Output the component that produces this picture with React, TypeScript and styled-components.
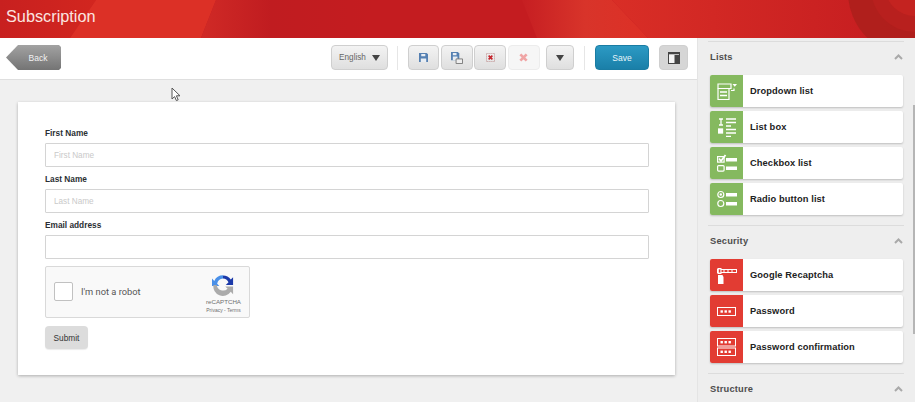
import React from 'react';
import styled, { createGlobalStyle } from 'styled-components';

const GlobalStyle = createGlobalStyle`
  html, body {
    margin: 0;
    padding: 0;
    width: 915px;
    height: 402px;
    overflow: hidden;
    background: #efefef;
    font-family: 'Liberation Sans', Arial, sans-serif;
  }
  * {
    box-sizing: border-box;
  }
`;

const Page = styled.div`
  width: 915px;
  height: 402px;
  display: flex;
  flex-direction: column;
  overflow: hidden;
  position: relative;
`;

const Header = styled.header`
  height: 38px;
  flex-shrink: 0;
  position: relative;
  display: flex;
  align-items: center;
  padding-left: 6px;
  background: #c41c20;
  overflow: hidden;
`;

const HeaderArt = styled.svg`
  position: absolute;
  left: 0;
  top: 0;
`;

const Title = styled.h1`
  position: relative;
  margin: 0 0 5px;
  font-size: 16.3px;
  font-weight: 400;
  color: #fbe4e0;
`;

const Body = styled.div`
  flex: 1;
  display: flex;
  min-height: 0;
`;

const Main = styled.main`
  width: 697px;
  flex-shrink: 0;
  display: flex;
  flex-direction: column;
  background: #f0f0f0;
`;

const Toolbar = styled.div`
  height: 42px;
  flex-shrink: 0;
  display: flex;
  align-items: center;
  padding: 0 9px 2px 6px;
  background: #fff;
  border-bottom: 1px solid #dfdfdf;
`;

const BackButton = styled.button`
  width: 55px;
  height: 25px;
  border: 0;
  padding: 0 0 0 9px;
  margin-right: auto;
  font: 400 8.5px 'Liberation Sans', Arial, sans-serif;
  color: #f2f2f2;
  background: linear-gradient(#a2a2a2, #747474);
  clip-path: polygon(0 50%, 12px 0, calc(100% - 2px) 0, 100% 2px, 100% calc(100% - 2px), calc(100% - 2px) 100%, 12px 100%);
`;

const GreyButton = styled.button<{ $width: number; $faded?: boolean }>`
  width: ${(props) => props.$width}px;
  height: 25px;
  padding: 0;
  display: flex;
  align-items: center;
  justify-content: center;
  gap: 6px;
  border: 1px solid ${(props) => (props.$faded ? '#ececec' : '#cfcfcf')};
  border-radius: 4px;
  background: ${(props) => (props.$faded ? '#f6f6f6' : 'linear-gradient(#f3f3f3, #dfdfdf)')};
  font: 400 8.2px 'Liberation Sans', Arial, sans-serif;
  color: #666;
`;

const ButtonGroup = styled.div`
  display: flex;
  gap: 1.5px;
`;

const MenuButton = styled(GreyButton)`
  margin-left: 6.5px;
`;

const Divider = styled.span<{ $left: number; $right: number }>`
  width: 1px;
  height: 24px;
  background: #e6e6e6;
  margin: 0 ${(props) => props.$right}px 0 ${(props) => props.$left}px;
`;

const SaveButton = styled.button`
  width: 54px;
  height: 25px;
  border: 1px solid #1a7ca3;
  border-radius: 4px;
  background: linear-gradient(#2c9ac4, #1a7fa8);
  color: #e8f6fb;
  font: 400 8.5px 'Liberation Sans', Arial, sans-serif;
  padding: 0;
`;

const PanelToggle = styled(GreyButton)`
  margin-left: 10px;
  background: #d6d6d6;
`;

const Caret = styled.span`
  width: 0;
  height: 0;
  border-left: 4px solid transparent;
  border-right: 4px solid transparent;
  border-top: 6px solid #444;
`;

const Content = styled.div`
  flex: 1;
  padding: 22px 22px 0 18px;
`;

const Card = styled.form`
  width: 657px;
  height: 273px;
  padding: 25px 26px 0 27px;
  background: #fff;
  box-shadow: 0 1px 3px rgba(0, 0, 0, 0.28);
`;

const Field = styled.div`
  display: flex;
  flex-direction: column;
  margin-bottom: 6px;
`;

const Label = styled.label`
  height: 16px;
  padding-top: 1px;
  font-size: 8.3px;
  font-weight: 700;
  color: #2b2f33;
`;

const Input = styled.input`
  width: 100%;
  height: 24px;
  padding: 0 8px;
  border: 1px solid #d4d4d4;
  border-radius: 1px;
  outline: none;
  background: #fff;
  font: 400 8.2px 'Liberation Sans', Arial, sans-serif;

  &::placeholder {
    color: #c9c9c9;
  }
`;

const Captcha = styled.div`
  width: 205px;
  height: 52px;
  margin-top: 7px;
  padding: 0 8px;
  display: flex;
  align-items: center;
  background: #f9f9f9;
  border: 1px solid #d9d9d9;
  border-radius: 2px;
`;

const CaptchaBox = styled.span`
  width: 19px;
  height: 19px;
  flex-shrink: 0;
  margin-bottom: 1px;
  background: #fff;
  border: 1px solid #c1c1c1;
  border-radius: 2px;
`;

const CaptchaText = styled.span`
  margin-left: 8px;
  margin-bottom: 2px;
  font: 400 9.3px Roboto, 'Liberation Sans', sans-serif;
  color: #555;
`;

const CaptchaBrand = styled.div`
  margin-left: auto;
  margin-top: 3px;
  display: flex;
  flex-direction: column;
  align-items: center;
  color: #6f6f6f;
`;

const BrandName = styled.span`
  font-size: 6.2px;
  line-height: 9px;
  margin-top: 1px;
`;

const BrandLinks = styled.span`
  font-size: 5px;
  line-height: 8px;
  white-space: nowrap;
`;

const SubmitButton = styled.button`
  display: block;
  width: 43px;
  height: 23px;
  margin-top: 8px;
  padding: 0;
  border: 0;
  border-radius: 4px;
  background: #dcdcdc;
  box-shadow: 0 1px 1px rgba(0, 0, 0, 0.08);
  font: 400 8.3px 'Liberation Sans', Arial, sans-serif;
  color: #333;
`;

const Sidebar = styled.aside`
  flex: 1;
  position: relative;
  padding: 3px 11px 0 10px;
  background: #eeeeee;
  border-left: 1px solid #e4e4e4;
  overflow: hidden;
`;

const ScrollThumb = styled.span`
  position: absolute;
  top: 67px;
  right: 0;
  width: 2px;
  height: 229px;
  background: #b5b5b5;
`;

const Section = styled.section`
  border-top: 1px solid #dcdcdc;
  padding: 0 1px 10px 2px;
`;

const SectionHead = styled.div`
  height: 33px;
  padding: 0 0 3px;
  display: flex;
  align-items: center;
  justify-content: space-between;
`;

const SectionTitle = styled.h2`
  margin: 0;
  font-size: 9.3px;
  font-weight: 700;
  letter-spacing: 0.2px;
  color: #4d4d4d;
`;

const ItemList = styled.div`
  display: flex;
  flex-direction: column;
  gap: 4px;
`;

const Item = styled.div`
  height: 32px;
  display: flex;
  align-items: center;
  background: #fff;
  border-radius: 2px;
  box-shadow: 0 1px 2px rgba(0, 0, 0, 0.2);
`;

const ItemIcon = styled.span<{ $color: string }>`
  width: 33px;
  height: 32px;
  flex-shrink: 0;
  display: flex;
  align-items: center;
  justify-content: center;
  background: ${(props) => props.$color};
  border-radius: 2px 0 0 2px;
`;

const ItemLabel = styled.span`
  margin-left: 7px;
  margin-bottom: 1px;
  font-size: 9.3px;
  font-weight: 700;
  letter-spacing: 0.1px;
  color: #222;
`;

const Cursor = styled.svg`
  position: absolute;
  left: 171px;
  top: 87px;
`;

const Chevron = () => (
  <svg width="9" height="6" viewBox="0 0 9 6">
    <path d="M1 5l3.5-3.5L8 5" fill="none" stroke="#a9a9a9" strokeWidth="2" />
  </svg>
);

const Floppy = () => (
  <svg width="9" height="9" viewBox="0 0 10 10">
    <path d="M0 0h8.5L10 1.5V10H0z" fill="#5580b2" />
    <path d="M2.5 1h4.5v2.5H2.5zM2 6h6v4H2z" fill="#e8edf3" />
  </svg>
);

const FloppyAs = () => (
  <svg width="12" height="12" viewBox="0 0 13 13">
    <path d="M0 0h7.5L9 1.5V9H0z" fill="#5580b2" />
    <path d="M2 1h4v2.5H2zM2 5h5v4H2z" fill="#e8edf3" />
    <path d="M5.5 7.5h7v5h-7z" fill="#eee" stroke="#777" />
  </svg>
);

const DottedCross = () => (
  <svg width="9" height="9" viewBox="0 0 11 11">
    <rect x="0.5" y="0.5" width="10" height="10" fill="none" stroke="#b88" strokeWidth="1" strokeDasharray="1.5 1" />
    <path d="M3.2 3.2l4.6 4.6M7.8 3.2l-4.6 4.6" stroke="#c6242c" strokeWidth="2" />
  </svg>
);

const FadedCross = () => (
  <svg width="9" height="9" viewBox="0 0 10 10">
    <path d="M1.5 1.5l7 7M8.5 1.5l-7 7" stroke="#f0a5a5" strokeWidth="3" />
  </svg>
);

const PanelIcon = () => (
  <svg width="12" height="12" viewBox="0 0 12 12">
    <rect x="0.5" y="0.5" width="11" height="11" fill="#f4f4f4" stroke="#444" />
    <rect x="6.5" y="3" width="5" height="8.5" fill="#444" />
    <rect x="0.5" y="0.5" width="11" height="1.8" fill="#444" />
  </svg>
);

const RecaptchaLogo = () => (
  <svg width="22" height="22" viewBox="0 0 24 24">
    <path d="M12 1.5A10.5 10.5 0 0 0 2.5 7.5L0 5v8h8L5.6 10.5A7 7 0 0 1 12 5z" fill="#4a90e8" />
    <path d="M12 1.5A10.5 10.5 0 0 1 20.5 6L23 3.5V12h-8l3-3A7 7 0 0 0 12 5z" fill="#1c3aa9" />
    <path d="M1.5 12h3.6A7 7 0 0 0 17 16l-2.5-2.5H23V22l-2.5-2.6A10.5 10.5 0 0 1 1.5 12z" fill="#ababab" />
  </svg>
);

const DropdownIcon = () => (
  <svg width="20" height="18" viewBox="0 0 20 18" fill="none" stroke="#fff" strokeWidth="1.2">
    <path d="M17 6.5v2H14M1 6.5v11h11v-11" />
    <path d="M1 2h13v4.5H1z" />
    <path d="M3 10h7M3 13.5h7" strokeWidth="1.6" />
    <path d="M15.5 2h4.5l-2.25 2.8z" fill="#fff" stroke="none" />
  </svg>
);

const ListBoxIcon = () => (
  <svg width="18" height="19" viewBox="0 0 18 19" fill="none" stroke="#fff" strokeWidth="1.3">
    <path d="M1 1h4M1 7h4M3 1v6" />
    <rect x="0.5" y="11" width="4" height="4" fill="#fff" />
    <path d="M8 1h10M8 4.5h10M8 8h5M8 11.5h10M8 15h10M8 18.5h5" />
  </svg>
);

const CheckboxIcon = () => (
  <svg width="20" height="18" viewBox="0 0 20 18" fill="none" stroke="#fff" strokeWidth="1.2">
    <rect x="0.6" y="2.6" width="6.5" height="5.5" />
    <path d="M2 4.5l2 2.5 4.5-6" strokeWidth="1.8" />
    <rect x="0.6" y="11.6" width="6.5" height="5.5" rx="1" />
    <rect x="9" y="4" width="11" height="3.5" fill="#fff" stroke="none" />
    <rect x="9" y="12.5" width="11" height="3.5" fill="#fff" stroke="none" />
  </svg>
);

const RadioIcon = () => (
  <svg width="20" height="18" viewBox="0 0 20 18" fill="none" stroke="#fff" strokeWidth="1.2">
    <circle cx="3.8" cy="4.5" r="3" />
    <circle cx="3.8" cy="4.5" r="1.2" fill="#fff" stroke="none" />
    <circle cx="3.8" cy="13.5" r="3" />
    <rect x="9" y="3" width="11" height="3.5" fill="#fff" stroke="none" />
    <rect x="9" y="12" width="11" height="3.5" fill="#fff" stroke="none" />
  </svg>
);

const RecaptchaIcon = () => (
  <svg width="20" height="18" viewBox="0 0 20 18" fill="none">
    <path d="M1 9h4.5l1 2V18H1z" fill="#fff" />
    <rect x="0.5" y="3.5" width="19" height="3" stroke="#fff" strokeWidth="1" />
    <path d="M6 5h2M10 5h2M14 5h2" stroke="#fff" strokeWidth="1.2" />
    <rect x="0.5" y="2" width="4" height="6" fill="#fff" />
    <rect x="1.8" y="3.4" width="1.6" height="3.2" fill="#e33b32" />
  </svg>
);

const Dots = ({ y }: { y: number }) => (
  <g fill="#fff">
    <rect x="3.5" y={y} width="2.4" height="2.4" />
    <rect x="7.5" y={y} width="2.4" height="2.4" />
    <rect x="11.5" y={y} width="2.4" height="2.4" />
  </g>
);

const PasswordIcon = () => (
  <svg width="19" height="9" viewBox="0 0 19 9" fill="none">
    <rect x="0.5" y="0.5" width="18" height="8" stroke="#fff" />
    <Dots y={3.3} />
  </svg>
);

const ConfirmIcon = () => (
  <svg width="19" height="18" viewBox="0 0 19 18" fill="none">
    <rect x="0.5" y="0.5" width="18" height="7.5" stroke="#fff" />
    <rect x="0.5" y="10" width="18" height="7.5" stroke="#fff" />
    <Dots y={3} />
    <Dots y={12.6} />
  </svg>
);

const GREEN = '#85b95f';
const RED = '#e23c33';

const sections = [
  {
    title: 'Lists',
    color: GREEN,
    items: [
      { label: 'Dropdown list', icon: <DropdownIcon /> },
      { label: 'List box', icon: <ListBoxIcon /> },
      { label: 'Checkbox list', icon: <CheckboxIcon /> },
      { label: 'Radio button list', icon: <RadioIcon /> },
    ],
  },
  {
    title: 'Security',
    color: RED,
    items: [
      { label: 'Google Recaptcha', icon: <RecaptchaIcon /> },
      { label: 'Password', icon: <PasswordIcon /> },
      { label: 'Password confirmation', icon: <ConfirmIcon /> },
    ],
  },
  { title: 'Structure', color: RED, items: [] },
];

const fields = [
  { label: 'First Name', placeholder: 'First Name' },
  { label: 'Last Name', placeholder: 'Last Name' },
  { label: 'Email address', placeholder: '' },
];

export default function App() {
  return (
    <Page>
      <GlobalStyle />
      <Header>
        <HeaderArt width="915" height="38" viewBox="0 0 915 38">
          <defs>
            <linearGradient id="bandB" x1="0" x2="1" y1="0" y2="0">
              <stop offset="0" stopColor="#c61e22" />
              <stop offset="0.5" stopColor="#d8342a" />
              <stop offset="1" stopColor="#dd3026" />
            </linearGradient>
            <linearGradient id="fade" x1="0" x2="1" y1="0" y2="0">
              <stop offset="0" stopColor="#d92e26" />
              <stop offset="1" stopColor="#c41c20" />
            </linearGradient>
            <linearGradient id="left" x1="0" x2="1" y1="0" y2="0">
              <stop offset="0" stopColor="#c8201f" />
              <stop offset="1" stopColor="#d2261f" />
            </linearGradient>
            <linearGradient id="mid" x1="0" x2="1" y1="0" y2="0">
              <stop offset="0" stopColor="#d02a26" />
              <stop offset="0.4" stopColor="#c01c20" />
              <stop offset="1" stopColor="#c41c20" />
            </linearGradient>
          </defs>
          <rect width="915" height="38" fill="#c41c20" />
          <path d="M0 0H96L70 38H0z" fill="url(#left)" />
          <path d="M96 0H216L201 38H70z" fill="#dc3026" />
          <path d="M216 0H376L356 38H201z" fill="url(#mid)" />
          <path d="M522 0H612L648 38H537z" fill="url(#bandB)" />
          <path d="M612 0H915V38H648z" fill="url(#fade)" />
          <circle cx="912" cy="-8" r="64" fill="#ad1f1c" opacity="0.9" />
          <circle cx="915" cy="-12" r="44" fill="#b8201e" />
          <circle cx="915" cy="-14" r="30" fill="#c42320" />
          <circle cx="915" cy="-18" r="18" fill="#cf2a26" />
        </HeaderArt>
        <Title>Subscription</Title>
      </Header>
      <Body>
        <Main>
          <Toolbar>
            <BackButton type="button">Back</BackButton>
            <GreyButton type="button" $width={57}>
              English <Caret />
            </GreyButton>
            <Divider $left={9} $right={10} />
            <ButtonGroup>
              <GreyButton type="button" $width={31}>
                <Floppy />
              </GreyButton>
              <GreyButton type="button" $width={32}>
                <FloppyAs />
              </GreyButton>
              <GreyButton type="button" $width={32}>
                <DottedCross />
              </GreyButton>
              <GreyButton type="button" $width={32} $faded>
                <FadedCross />
              </GreyButton>
            </ButtonGroup>
            <MenuButton type="button" $width={28}>
              <Caret />
            </MenuButton>
            <Divider $left={10} $right={10} />
            <SaveButton type="button">Save</SaveButton>
            <PanelToggle type="button" $width={29}>
              <PanelIcon />
            </PanelToggle>
          </Toolbar>
          <Content>
            <Card>
              {fields.map((field) => (
                <Field key={field.label}>
                  <Label>{field.label}</Label>
                  <Input placeholder={field.placeholder} />
                </Field>
              ))}
              <Captcha>
                <CaptchaBox />
                <CaptchaText>I'm not a robot</CaptchaText>
                <CaptchaBrand>
                  <RecaptchaLogo />
                  <BrandName>reCAPTCHA</BrandName>
                  <BrandLinks>Privacy - Terms</BrandLinks>
                </CaptchaBrand>
              </Captcha>
              <SubmitButton type="button">Submit</SubmitButton>
            </Card>
          </Content>
        </Main>
        <Sidebar>
          <ScrollThumb />
          {sections.map((section) => (
            <Section key={section.title}>
              <SectionHead>
                <SectionTitle>{section.title}</SectionTitle>
                <Chevron />
              </SectionHead>
              <ItemList>
                {section.items.map((item) => (
                  <Item key={item.label}>
                    <ItemIcon $color={section.color}>{item.icon}</ItemIcon>
                    <ItemLabel>{item.label}</ItemLabel>
                  </Item>
                ))}
              </ItemList>
            </Section>
          ))}
        </Sidebar>
      </Body>
      <Cursor width="11" height="15" viewBox="0 0 11 15">
        <path d="M1 1v11l2.6-2.4 1.8 4 1.8-.8-1.8-4H9z" fill="#fff" stroke="#555" strokeWidth="1" />
      </Cursor>
    </Page>
  );
}
